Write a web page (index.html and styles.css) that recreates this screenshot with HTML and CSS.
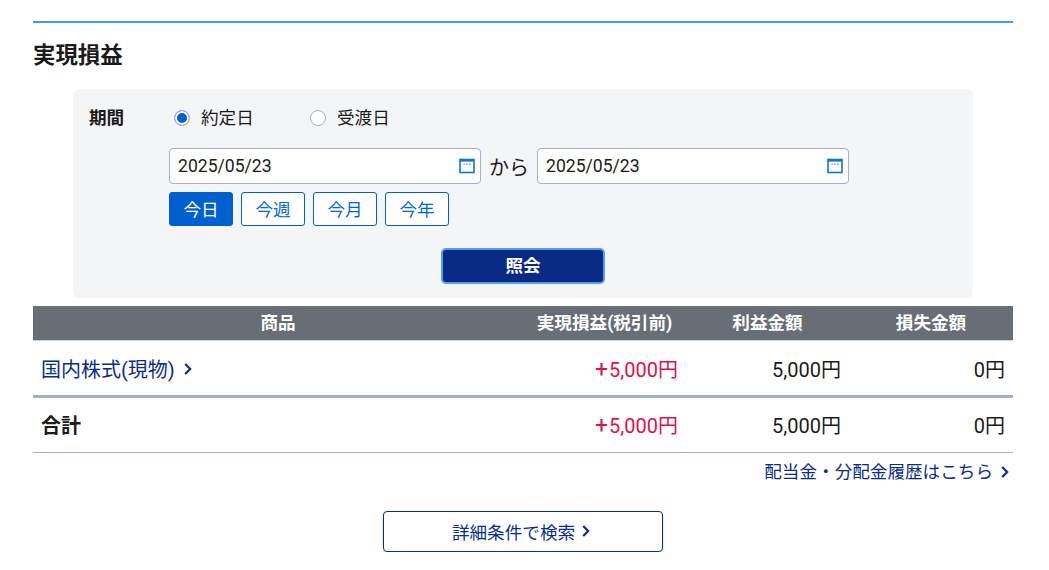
FILE: index.html
```html
<!DOCTYPE html>
<html lang="ja">
<head>
<meta charset="utf-8">
<title>実現損益</title>
<link rel="stylesheet" href="styles.css">
</head>
<body>
<svg class="defs" width="0" height="0" aria-hidden="true">
  <symbol id="cal" viewBox="0 0 16 16">
    <rect x="1" y="1.500" width="14" height="13" fill="#fff" stroke="#1273d6" stroke-width="1.600"/>
    <rect x="1" y="1" width="14" height="2.600" fill="#1273d6"/>
    <path d="M4.500 6.200h1.400M7.300 6.200h1.400M10.100 6.200h1.400" stroke="#1273d6" stroke-width="1"/>
  </symbol>
  <symbol id="chev" viewBox="0 0 8 12">
    <path d="M1.200 1 6.200 6l-5 5" fill="none" stroke="currentColor" stroke-width="2.200"/>
  </symbol>
</svg>
<main class="page">
  <h1 class="title">実現損益</h1>
  <form class="panel">
    <div class="period">
      <div class="period-label">期間</div>
      <div class="period-body">
        <div class="radios">
          <label class="radio"><span class="dot dot-on"></span>約定日</label>
          <label class="radio"><span class="dot"></span>受渡日</label>
        </div>
        <div class="dates">
          <div class="date"><span>2025/05/23</span><svg class="cal"><use href="#cal"/></svg></div>
          <span class="kara">から</span>
          <div class="date"><span>2025/05/23</span><svg class="cal"><use href="#cal"/></svg></div>
        </div>
        <div class="quick">
          <button type="button" class="chip chip-on">今日</button>
          <button type="button" class="chip">今週</button>
          <button type="button" class="chip">今月</button>
          <button type="button" class="chip">今年</button>
        </div>
      </div>
    </div>
    <div class="submit-row"><button type="button" class="submit">照会</button></div>
  </form>
  <table class="result">
    <colgroup><col class="c1"><col class="c2"><col class="c3"><col class="c4"></colgroup>
    <thead>
      <tr><th>商品</th><th>実現損益(税引前)</th><th>利益金額</th><th>損失金額</th></tr>
    </thead>
    <tbody>
      <tr class="row-item">
        <td><a class="link">国内株式(現物)<svg class="chev chev-row"><use href="#chev"/></svg></a></td>
        <td class="num plus"><span class="sign">+</span>5,000円</td><td class="num">5,000円</td><td class="num">0円</td>
      </tr>
      <tr class="row-total">
        <td class="total-label">合計</td>
        <td class="num plus"><span class="sign">+</span>5,000円</td><td class="num">5,000円</td><td class="num">0円</td>
      </tr>
    </tbody>
  </table>
  <div class="more"><a class="link">配当金・分配金履歴はこちら<svg class="chev"><use href="#chev"/></svg></a></div>
  <div class="search-row"><a class="search link">詳細条件で検索<svg class="chev chev-search"><use href="#chev"/></svg></a></div>
</main>
</body>
</html>
```
FILE: styles.css
```css
* { box-sizing: border-box; }
html, body { margin: 0; padding: 0; background: #fff; }
body {
  font-family: Roboto, "Noto Sans CJK JP", sans-serif;
  font-size: 17.6px;
  color: #1a1a1a;
  overflow: hidden;
}
.defs { position: absolute; }
.page { width: 980px; margin: 21px 0 0 33px; border-top: 2px solid #3b9ee3; }
.title { margin: 0; padding-top: 16px; font-size: 22.4px; line-height: 32px; font-weight: 700; height: 66px; }
.panel { width: 900px; height: 209px; margin-left: 40px; background: #f4f5f7; border-radius: 6px; padding: 16px 0 0 16px; }
.period { display: flex; height: 121px; }
.period-label { width: 80px; font-weight: 700; line-height: 26px; }
.period-body { display: flex; flex-direction: column; }
.radios { display: flex; height: 26px; padding-left: 5px; align-items: center; }
.radio { display: flex; align-items: center; width: 136px; line-height: 26px; }
.dot { width: 16px; height: 16px; border: 1px solid #a5b0c5; border-radius: 50%; background: #fff; margin-right: 11px; flex: none; }
.dot-on { background: #0060d0; box-shadow: inset 0 0 0 2px #fff; }
.dates { display: flex; align-items: center; margin-top: 17px; }
.date { width: 312px; height: 36px; background: #fff; border: 1px solid #a5b0c5; border-radius: 4px; display: flex; align-items: center; justify-content: space-between; padding: 0 5px 0 8px; line-height: 34px; }
.cal { width: 16px; height: 16px; }
.kara { width: 56px; text-align: center; font-size: 20px; }
.quick { display: flex; gap: 8px; margin-top: 8px; }
.chip { width: 64px; height: 34px; padding: 0 0 2px; background: #fff; border: 1px solid #0060d0; border-radius: 3px; color: #0068d0; font: inherit; }
.chip-on { background: #0060d0; color: #fff; }
.submit-row { display: flex; justify-content: center; margin-top: 22px; padding-right: 16px; }
.submit { width: 164px; height: 36px; padding: 0 0 3px; background: #082a85; color: #fff; border: 2px solid #549ff0; border-radius: 5px; font: inherit; font-weight: 700; }
.result { width: 980px; margin-top: 8px; border-collapse: collapse; table-layout: fixed; }
.c1 { width: 490px; }
.c2, .c3 { width: 163px; }
.c4 { width: 164px; }
.result th { height: 34px; padding: 0 0 3px; background: #696d75; color: #fff; font-size: 17.6px; font-weight: 700; text-align: center; border-bottom: 1px solid #c9d0de; }
.result td { padding: 0 8px; font-size: 20px; }
.result .row-item td { height: 56px; padding-top: 2px; border-bottom: 3px solid #a5b0c5; }
.row-total td { height: 56px; border-bottom: 1px solid #a5b0c5; }
.result .total-label { font-weight: 700; }
.num { text-align: right; }
.plus { color: #e0104a; }
.sign { font-size: 23px; line-height: 1; margin-right: 1px; }
.link { color: #0a2d85; display: inline-flex; align-items: center; }
.chev { width: 8px; height: 12px; margin-left: 8px; color: #0a2d85; }
.chev-row { margin-left: 9px; }
.chev-search { margin-left: 7px; }
.more { text-align: right; padding-top: 7px; height: 42px; line-height: 24px; padding-right: 4px; }
.search-row { display: flex; justify-content: center; margin-top: 16px; }
.search { width: 280px; height: 41px; padding-right: 4px; justify-content: center; border: 1px solid #0a2d85; border-radius: 4px; box-shadow: 0 1px 2px rgba(0,0,0,.25); }
```
